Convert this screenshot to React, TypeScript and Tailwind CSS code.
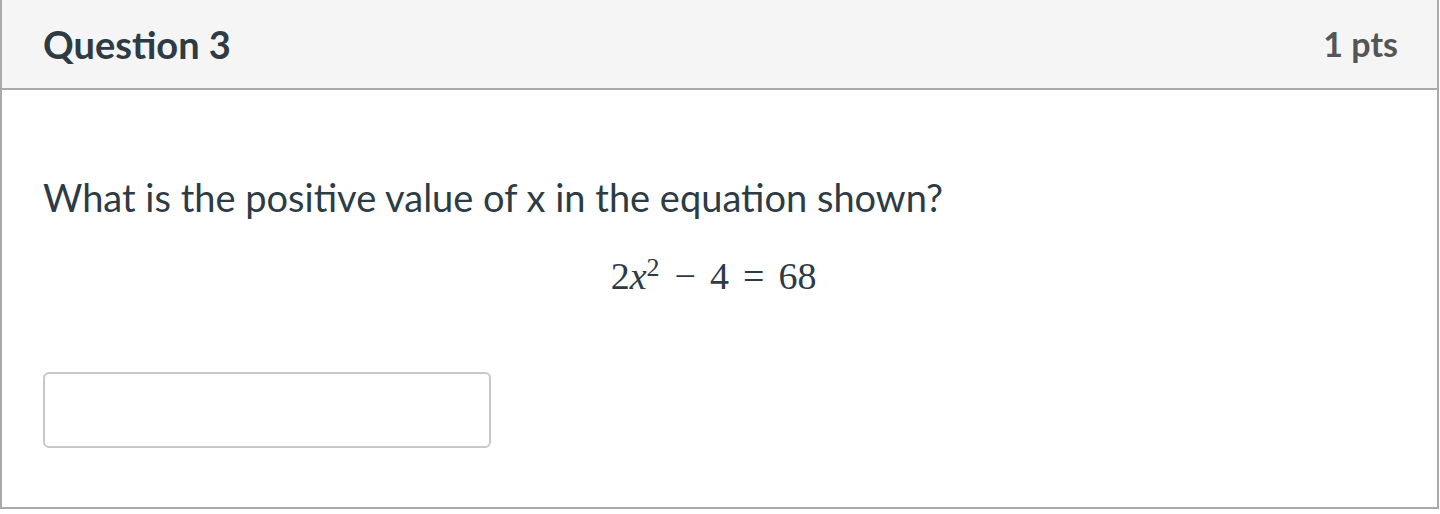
export default function App() {
  return (
    <div className="w-[1440px] h-[514px] bg-white" style={{ fontFamily: "Lato, 'Liberation Sans', sans-serif" }}>
      <div className="w-[1439px] h-[509px] border-l-2 border-r-2 border-b-2 border-[#a9a9a9] flex flex-col">
        <div className="h-[90px] shrink-0 bg-[#f5f5f5] border-b-2 border-[#a9a9a9] flex items-center justify-between pl-[41px] pr-[39px]">
          <h2 className="text-[38px] font-bold text-[#2d3b45] leading-none">Question 3</h2>
          <span className="text-[34px] font-bold text-[#555555] leading-none">1 pts</span>
        </div>
        <div className="flex-1 pl-[41px] pr-[41px]">
          <p className="mt-[88px] text-[38px] text-[#2d3b45] leading-none">
            What is the positive value of x in the equation shown?
          </p>
          <div
            className="mt-[41px] pr-[12px] text-center text-[38px] text-[#2d3b45] leading-none"
            style={{ fontFamily: "'Liberation Serif', 'DejaVu Serif', serif" }}
          >
            2<span className="italic">x</span>
            <sup className="text-[26px] leading-none">2</sup>
            <span className="ml-[15px] mr-[14px]">−</span>4<span className="mx-[14px]">=</span>68
          </div>
          <input
            type="text"
            className="mt-[77px] block w-[448px] h-[76px] rounded-[6px] border-2 border-[#c8c8c8] bg-white outline-none"
          />
        </div>
      </div>
    </div>
  );
}
